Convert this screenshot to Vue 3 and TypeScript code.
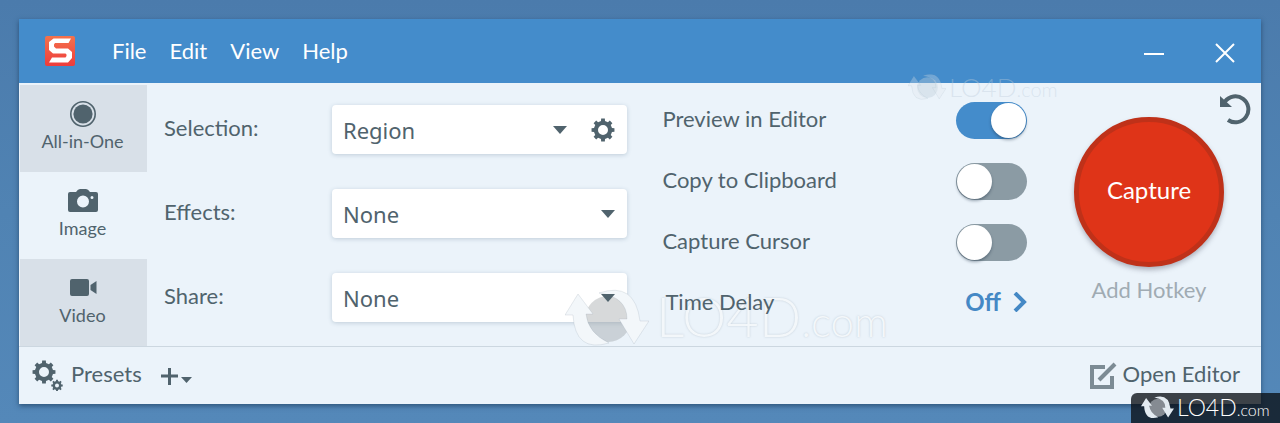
<script setup lang="ts">
import { reactive, ref } from 'vue'

const menus: string[] = ['File', 'Edit', 'View', 'Help']
const mode = ref('Image')
const modes: string[] = ['All-in-One', 'Image', 'Video']
const fields = reactive([
  { id: 'selection', label: 'Selection:', value: 'Region', options: ['Region', 'Window', 'Fullscreen'], gear: true },
  { id: 'effects', label: 'Effects:', value: 'None', options: ['None', 'Border', 'Shadow'], gear: false },
  { id: 'share', label: 'Share:', value: 'None', options: ['None', 'File', 'Clipboard'], gear: false },
])
const toggles = reactive([
  { id: 'preview', label: 'Preview in Editor', on: true },
  { id: 'clipboard', label: 'Copy to Clipboard', on: false },
  { id: 'cursor', label: 'Capture Cursor', on: false },
])

function gearPath(cx: number, cy: number, outer: number, body: number, hole: number): string {
  const pts: string[] = []
  const steps: [number, number][] = [[-0.22, body], [-0.16, outer], [0.16, outer], [0.22, body]]
  for (let i = 0; i < 8; i++) {
    const mid = (i * Math.PI) / 4
    for (const [d, r] of steps) {
      pts.push(`${(cx + r * Math.cos(mid + d)).toFixed(2)} ${(cy + r * Math.sin(mid + d)).toFixed(2)}`)
    }
  }
  return `M${pts.join('L')}Z M${cx - hole} ${cy}a${hole} ${hole} 0 1 0 ${hole * 2} 0a${hole} ${hole} 0 1 0 ${-hole * 2} 0Z`
}
const gear = gearPath(12, 12, 11.6, 9.2, 5)
const presetsGear = gearPath(12, 12, 11.6, 9.2, 5) + gearPath(25, 25.5, 5.8, 4.5, 2)

const brands: string[] = ['brand-small', 'brand-large', 'brand-badge']
</script>

<template>
  <div class="desktop">
    <main class="window">
      <header class="titlebar">
        <svg class="logo" viewBox="0 0 30 30" aria-hidden="true">
          <defs>
            <linearGradient id="logo-fill" x1="0" y1="0" x2="0" y2="1">
              <stop offset="0" stop-color="#f4724c" />
              <stop offset="1" stop-color="#ee3c3c" />
            </linearGradient>
          </defs>
          <rect width="30" height="30" rx="2" fill="url(#logo-fill)" />
          <path d="M26 2.500L23.500 7H10L9 8.500v2l2 2h12l4 3.500v6l-4 4.500H4L7 21.500h13.500l1-1.500v-1.500l-1-1H8L4 14V6l4.500-3.500z" fill="#fff" />
        </svg>
        <nav class="menu">
          <button v-for="m in menus" :key="m" type="button">{{ m }}</button>
        </nav>
        <div class="controls">
          <button type="button" aria-label="Minimize">
            <svg viewBox="0 0 20 20"><path d="M0 11h20" /></svg>
          </button>
          <button type="button" aria-label="Close">
            <svg viewBox="0 0 20 20"><path d="M1 1l18 18M19 1L1 19" /></svg>
          </button>
        </div>
      </header>

      <section class="body">
        <nav class="modes">
          <button v-for="m in modes" :key="m" type="button" :class="{ active: mode === m }" @click="mode = m">
            <svg v-if="m === 'All-in-One'" class="mode-icon" viewBox="0 0 30 26">
              <circle cx="15" cy="13" r="12.2" fill="none" stroke="currentColor" stroke-width="1.6" />
              <circle cx="15" cy="13" r="9.6" />
            </svg>
            <svg v-else-if="m === 'Image'" class="mode-icon" viewBox="0 0 30 26">
              <path fill-rule="evenodd" d="M2 4h6q2-3 4-3h6q2 0 4 3h6q2 0 2 2v16q0 2-2 2H2q-2 0-2-2V6q0-2 2-2zM15 7.500a6 6 0 1 0 0 12a6 6 0 1 0 0-12zM24 8a1.500 1.500 0 1 0 0 3a1.500 1.500 0 1 0 0-3z" />
            </svg>
            <svg v-else class="mode-icon" viewBox="0 0 30 26">
              <path d="M4 4h15q2 0 2 2v13q0 2-2 2H4q-2 0-2-2V6q0-2 2-2zM22.500 10l6-4v13l-6-4z" />
            </svg>
            <span>{{ m }}</span>
          </button>
        </nav>

        <div class="form">
          <div v-for="f in fields" :key="f.id" class="field">
            <label :for="f.id">{{ f.label }}</label>
            <div class="box">
              <div class="pick">
                <select :id="f.id" v-model="f.value">
                  <option v-for="o in f.options" :key="o">{{ o }}</option>
                </select>
                <svg class="caret" viewBox="0 0 14 8"><path d="M0 0h14L7 8z" /></svg>
              </div>
              <button v-if="f.gear" class="gear" type="button" aria-label="Selection settings">
                <svg viewBox="0 0 24 24"><path :d="gear" fill-rule="evenodd" /></svg>
              </button>
            </div>
          </div>
        </div>

        <div class="options">
          <div v-for="t in toggles" :key="t.id" class="option">
            <label :for="t.id">{{ t.label }}</label>
            <input :id="t.id" v-model="t.on" class="switch" type="checkbox" role="switch" />
          </div>
          <div class="option delay">
            <span id="delay-label">Time Delay</span>
            <button type="button" aria-describedby="delay-label">
              Off
              <svg viewBox="0 0 14 20"><path d="M2 1l9 9-9 9" /></svg>
            </button>
          </div>
        </div>

        <div class="shoot">
          <button class="reset" type="button" aria-label="Reset">
            <svg viewBox="0 0 32 32">
              <path d="M6 8.500A13 13 0 1 1 9 27" fill="none" stroke="currentColor" stroke-width="4" />
              <path d="M1 3v11h12z" />
            </svg>
          </button>
          <button class="capture" type="button">Capture</button>
          <button class="hotkey" type="button">Add Hotkey</button>
        </div>
      </section>

      <footer class="footer">
        <button class="presets" type="button">
          <svg viewBox="0 0 31 31"><path :d="presetsGear" fill-rule="evenodd" /></svg>
          <span>Presets</span>
        </button>
        <button class="add" type="button" aria-label="Add preset">
          <svg viewBox="0 0 32 18">
            <path d="M0 9h17M8.500 1v17" fill="none" stroke="currentColor" stroke-width="3" />
            <path d="M20 10h11l-5.500 6z" />
          </svg>
        </button>
        <button class="editor" type="button">
          <svg viewBox="0 0 28 28">
            <path d="M16 5H3v20h20V14" />
            <path d="M10 18L26 2" />
          </svg>
          <span>Open Editor</span>
        </button>
      </footer>
    </main>

    <div v-for="b in brands" :key="b" class="brand" :class="b">
      <svg viewBox="0 0 84 60">
        <circle class="globe" cx="43" cy="30" r="23" />
        <path class="arrow" d="M0 26L13 5l15 20h-7q2 19 23 29-34 10-36-28zM84 32L69 55 54 30h8Q62 8 34 4q36-12 41 28z" />
      </svg>
      <span class="brand-name">LO4D<small>.com</small></span>
    </div>
  </div>
</template>

<style>
body {
  margin: 0;
}
</style>

<style scoped>
.desktop {
  position: relative;
  box-sizing: border-box;
  min-height: 100vh;
  padding: 19px;
  overflow: hidden;
  background: linear-gradient(#4b7bac, #5083b3 50%, #5488b9);
  color: #50636d;
  font: 22px/28px Lato, "Open Sans", sans-serif;
}
button,
select,
input {
  margin: 0;
  padding: 0;
  border: 0;
  background: none;
  color: inherit;
  font: inherit;
}
button {
  cursor: pointer;
}
svg {
  display: block;
  fill: currentColor;
}
.window {
  background: #ebf3fa;
  box-shadow: 0 2px 5px rgba(20, 50, 80, 0.6);
}
.titlebar {
  display: flex;
  align-items: center;
  height: 64px;
  padding: 0 26px;
  background: #448ccb;
  color: #fff;
}
.logo {
  width: 30px;
}
.menu {
  display: flex;
  gap: 23px;
  margin-left: 37px;
}
.controls {
  display: flex;
  gap: 51px;
  margin-left: auto;
  padding-top: 4px;
}
.controls svg {
  width: 20px;
  fill: none;
  stroke: currentColor;
  stroke-width: 2;
}
.body {
  display: grid;
  grid-template-columns: 128px 41fr 29fr 234px;
  border-bottom: 1px solid #ccd7e0;
}
.modes {
  display: grid;
  grid-template-rows: repeat(3, 1fr);
  padding: 2px 0 0 1px;
}
.modes button {
  display: flex;
  flex-direction: column;
  align-items: center;
  padding: 16px 2px 0 0;
  background: #d8e0e8;
  font-size: 18px;
}
.modes button.active {
  background: none;
}
.mode-icon {
  width: 30px;
  height: 26px;
}
.form {
  display: grid;
  gap: 35px;
  align-content: start;
  padding: 22px 35px 24px 17px;
}
.field {
  display: grid;
  grid-template-columns: 168px 1fr;
  align-items: center;
}
.field label,
.option label,
.delay span {
  padding-bottom: 3px;
}
.box {
  display: flex;
  height: 49px;
  border-radius: 4px;
  background: #fff;
  box-shadow: 0 1px 4px rgba(60, 90, 120, 0.25);
}
.pick {
  display: grid;
  flex: 1;
  align-items: center;
}
.pick > * {
  grid-area: 1 / 1;
}
.pick select {
  height: 100%;
  padding-left: 11px;
  appearance: none;
  font-family: "Noto Sans", sans-serif;
}
.caret {
  position: relative;
  z-index: 2;
  width: 14px;
  margin-right: 12px;
  justify-self: end;
  pointer-events: none;
}
.gear {
  width: 48px;
}
.gear svg {
  width: 24px;
  margin: 0 auto;
}
.options {
  display: grid;
  gap: 24px;
  align-content: start;
  padding-top: 19px;
}
.option {
  display: flex;
  align-items: center;
  justify-content: space-between;
  height: 37px;
}
.switch {
  display: flex;
  box-sizing: border-box;
  width: 71px;
  height: 37px;
  padding: 1px;
  border-radius: 19px;
  appearance: none;
  background: #8b9ba4;
}
.switch::before {
  width: 35px;
  height: 35px;
  border-radius: 50%;
  background: #fff;
  box-shadow: 0 2px 3px rgba(30, 50, 70, 0.4);
  content: "";
}
.switch:checked {
  justify-content: flex-end;
  background: #448ccb;
}
.delay {
  position: relative;
  z-index: 2;
  padding-left: 3px;
}
.delay button {
  display: flex;
  align-items: center;
  gap: 12px;
  padding-bottom: 3px;
  color: #4488c5;
  font-size: 24px;
  font-weight: 700;
}
.delay svg {
  width: 14px;
  fill: none;
  stroke: currentColor;
  stroke-width: 4;
}
.shoot {
  display: flex;
  flex-direction: column;
  align-items: center;
  padding: 10px 0 0 10px;
}
.reset {
  align-self: flex-end;
  height: 24px;
  margin-right: 10px;
}
.reset svg {
  width: 32px;
}
.capture {
  width: 150px;
  height: 150px;
  padding-bottom: 4px;
  border: 5px solid #bf3119;
  border-radius: 50%;
  background: #df3418;
  box-shadow: 0 3px 5px rgba(60, 60, 80, 0.35);
  color: #fff;
  font-size: 24px;
}
.hotkey {
  margin-top: 9px;
  color: #a0abb3;
}
.footer {
  display: flex;
  align-items: center;
  height: 57px;
  padding: 0 21px 0 13px;
}
.presets,
.editor {
  display: flex;
  align-items: center;
  gap: 8px;
}
.presets span,
.editor span {
  padding-bottom: 3px;
}
.presets svg {
  width: 31px;
}
.add {
  margin-left: 19px;
}
.add svg {
  width: 32px;
}
.editor {
  gap: 6px;
  margin-left: auto;
}
.editor svg {
  width: 28px;
  fill: none;
  stroke: #7c8b94;
  stroke-width: 4;
}
.brand {
  position: absolute;
  display: flex;
  align-items: center;
  pointer-events: none;
  white-space: nowrap;
}
.brand-name {
  font-weight: 300;
}
.brand-large {
  z-index: 1;
  top: 286px;
  left: 565px;
  gap: 7px;
  color: #f3f7fa;
  font-size: 56px;
  line-height: 60px;
  text-shadow: 0 0 2px rgba(140, 155, 170, 0.45);
}
.brand-large small {
  font-size: 42px;
}
.brand-large svg {
  width: 84px;
}
.brand-large .arrow {
  stroke: rgba(140, 155, 170, 0.2);
}
.brand-large .globe {
  fill: rgba(140, 145, 150, 0.35);
}
.brand-small {
  top: 72px;
  left: 908px;
  gap: 3px;
  color: rgba(190, 205, 218, 0.4);
  font-size: 26px;
  line-height: 30px;
}
.brand-small small {
  font-size: 20px;
}
.brand-small svg {
  width: 38px;
}
.brand-small .arrow {
  fill: rgba(225, 233, 240, 0.3);
  stroke: rgba(150, 170, 190, 0.3);
}
.brand-badge {
  right: 0;
  bottom: 0;
  box-sizing: border-box;
  width: 149px;
  height: 30px;
  padding-left: 10px;
  gap: 3px;
  border-radius: 6px 0 0;
  background: rgba(10, 15, 22, 0.78);
  color: #fff;
  font-size: 23px;
  line-height: 30px;
}
.brand-badge small {
  font-size: 16px;
}
.brand-badge svg {
  width: 33px;
}
.brand-badge .arrow {
  fill: #e3ebf1;
}
.brand-badge .globe {
  fill: #858b92;
}
</style>
